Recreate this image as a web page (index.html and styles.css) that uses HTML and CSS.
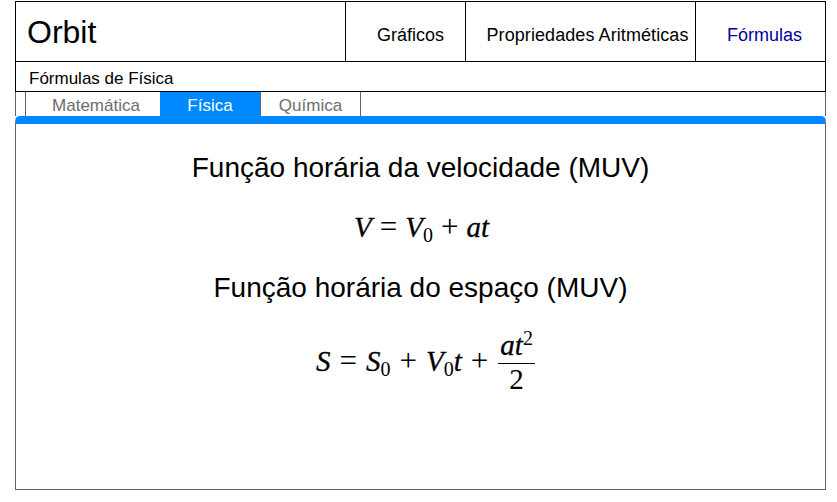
FILE: index.html
```html
<!DOCTYPE html>
<html lang="pt-BR">
<head>
<meta charset="UTF-8">
<title>Orbit</title>
<link rel="stylesheet" href="styles.css">
</head>
<body>
<div class="page">
  <header class="topbar">
    <div class="brand">Orbit</div>
    <nav class="nav">
      <a class="nav-item nav-graficos">Gráficos</a>
      <a class="nav-item nav-propriedades">Propriedades Aritméticas</a>
      <a class="nav-item nav-formulas">Fórmulas</a>
    </nav>
  </header>
  <div class="subtitle">Fórmulas de Física</div>
  <div class="tabs">
    <a class="tab tab-matematica">Matemática</a>
    <a class="tab tab-fisica">Física</a>
    <a class="tab tab-quimica">Química</a>
  </div>
  <main class="panel">
    <h2 class="title title-first">Função horária da velocidade (MUV)</h2>
    <div class="formula formula-first"><i>V</i><span class="op">=</span><i>V</i><sub>0</sub><span class="op">+</span><i>at</i></div>
    <h2 class="title title-second">Função horária do espaço (MUV)</h2>
    <div class="formula formula-second"><i>S</i><span class="op">=</span><i>S</i><sub>0</sub><span class="op">+</span><i>V</i><sub>0</sub><i>t</i><span class="op">+</span><span class="frac"><span class="num"><i>at</i><sup>2</sup></span><span class="den">2</span></span></div>
  </main>
</div>
</body>
</html>
```

FILE: styles.css
```css
body {
  margin: 0;
  background-color: #fff;
  color: #000;
  font-family: "Liberation Sans", Arial, sans-serif;
}

.page {
  width: 811px;
  margin: 1px 0 0 15px;
}

.topbar {
  display: flex;
  height: 60px;
  box-sizing: border-box;
  border: 1px solid #000;
  border-bottom: none;
}

.brand {
  flex: 1;
  padding-left: 11px;
  font-size: 32px;
  line-height: 60px;
}

.nav {
  display: flex;
}

.nav-item {
  display: flex;
  align-items: center;
  justify-content: center;
  box-sizing: border-box;
  padding-top: 8px;
  border-left: 1px solid #000;
  font-size: 18px;
}

.nav-graficos {
  width: 120px;
  padding-left: 10px;
}

.nav-propriedades {
  width: 230px;
  padding-left: 14px;
  letter-spacing: 0.08px;
}

.nav-formulas {
  width: 130px;
  padding-left: 8px;
  color: #00009c;
}

.subtitle {
  box-sizing: border-box;
  height: 31px;
  padding-left: 13px;
  border: 1px solid #000;
  font-size: 17px;
  line-height: 33px;
}

.tabs {
  display: flex;
  height: 24px;
  padding-left: 9px;
  border-left: 1px solid #666;
  border-right: 1px solid #666;
}

.tab {
  box-sizing: border-box;
  text-align: center;
  color: #6e6e6e;
  font-size: 17px;
  line-height: 28px;
  border-right: 1px solid #666;
}

.tab-matematica {
  width: 135px;
  padding-left: 6px;
  border-left: 1px solid #666;
  border-right: none;
}

.tab-fisica {
  width: 100px;
  background-color: #0088ff;
  color: #fff;
  border-right: none;
}

.tab-quimica {
  width: 101px;
  border-left: 1px solid #666;
}

.panel {
  box-sizing: border-box;
  height: 374px;
  border: 1px solid #666;
  border-top: 8px solid #0088ff;
  border-radius: 5px 5px 0 0;
  text-align: center;
}

.title {
  margin: 0;
  font-size: 28px;
  font-weight: normal;
  line-height: 32px;
}

.title-first {
  padding-top: 28px;
}

.title-second {
  padding-top: 27px;
}

.formula {
  font-family: "Liberation Serif", "Times New Roman", serif;
  font-size: 29px;
  line-height: 32px;
}

.formula-first {
  padding-top: 27px;
  padding-left: 2px;
}

.formula-second {
  padding-top: 24px;
  padding-left: 10px;
}

.formula i {
  -webkit-text-stroke: 0.3px #000;
}

.formula sub {
  font-size: 20px;
  line-height: 20px;
  vertical-align: -5px;
}

.op {
  padding: 0 8px;
  font-size: 31px;
}

.formula-second .op {
  padding: 0 9px;
}

.frac {
  display: inline-flex;
  flex-direction: column;
  align-items: center;
  vertical-align: middle;
  margin: 0 0 6px 1px;
}

.num {
  padding: 0 2px 2px;
  border-bottom: 1px solid #000;
}

.num sup {
  font-size: 20px;
  line-height: 20px;
  vertical-align: 10px;
}

.den {
  line-height: 30px;
}
```
